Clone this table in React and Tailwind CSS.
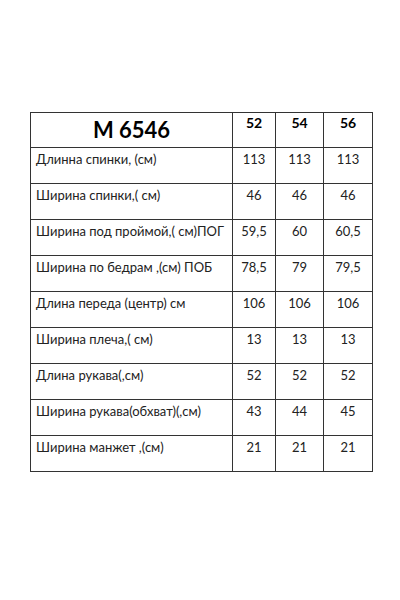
const rows = [
  ['Длинна спинки, (см)', '113', '113', '113'],
  ['Ширина спинки,( см)', '46', '46', '46'],
  ['Ширина под проймой,( см)ПОГ', '59,5', '60', '60,5'],
  ['Ширина по бедрам ,(см) ПОБ', '78,5', '79', '79,5'],
  ['Длина переда (центр) см', '106', '106', '106'],
  ['Ширина плеча,( см)', '13', '13', '13'],
  ['Длина рукава(,см)', '52', '52', '52'],
  ['Ширина рукава(обхват)(,см)', '43', '44', '45'],
  ['Ширина манжет ,(см)', '21', '21', '21'],
];

export default function App() {
  return (
    <div className="w-[400px] h-[600px] bg-white pt-[112px] pl-[30px]" style={{ fontFamily: 'Lato, "Open Sans", sans-serif' }}>
      <table className="border-collapse text-[#222] border border-[#333]">
        <colgroup>
          <col className="w-[202px]" />
          <col className="w-[43px]" />
          <col className="w-[48px]" />
          <col className="w-[49px]" />
        </colgroup>
        <thead>
          <tr className="h-[35px]">
            <th className="border border-[#333] p-0 align-middle text-[22px] font-bold leading-none text-black">M 6546</th>
            {['52', '54', '56'].map((s) => (
              <th key={s} className="border border-[#333] p-0 pt-[2px] align-top text-[14px] font-bold leading-[16px] text-black">{s}</th>
            ))}
          </tr>
        </thead>
        <tbody>
          {rows.map((r) => (
            <tr key={r[0]} className="h-[36px]">
              <td className="border border-[#333] px-[5px] pt-[3px] align-top text-[13px] leading-[16px] whitespace-nowrap">{r[0]}</td>
              {r.slice(1).map((v, i) => (
                <td key={i} className="border border-[#333] p-0 pt-[3px] align-top text-center text-[13px] leading-[16px]">{v}</td>
              ))}
            </tr>
          ))}
        </tbody>
      </table>
    </div>
  );
}
